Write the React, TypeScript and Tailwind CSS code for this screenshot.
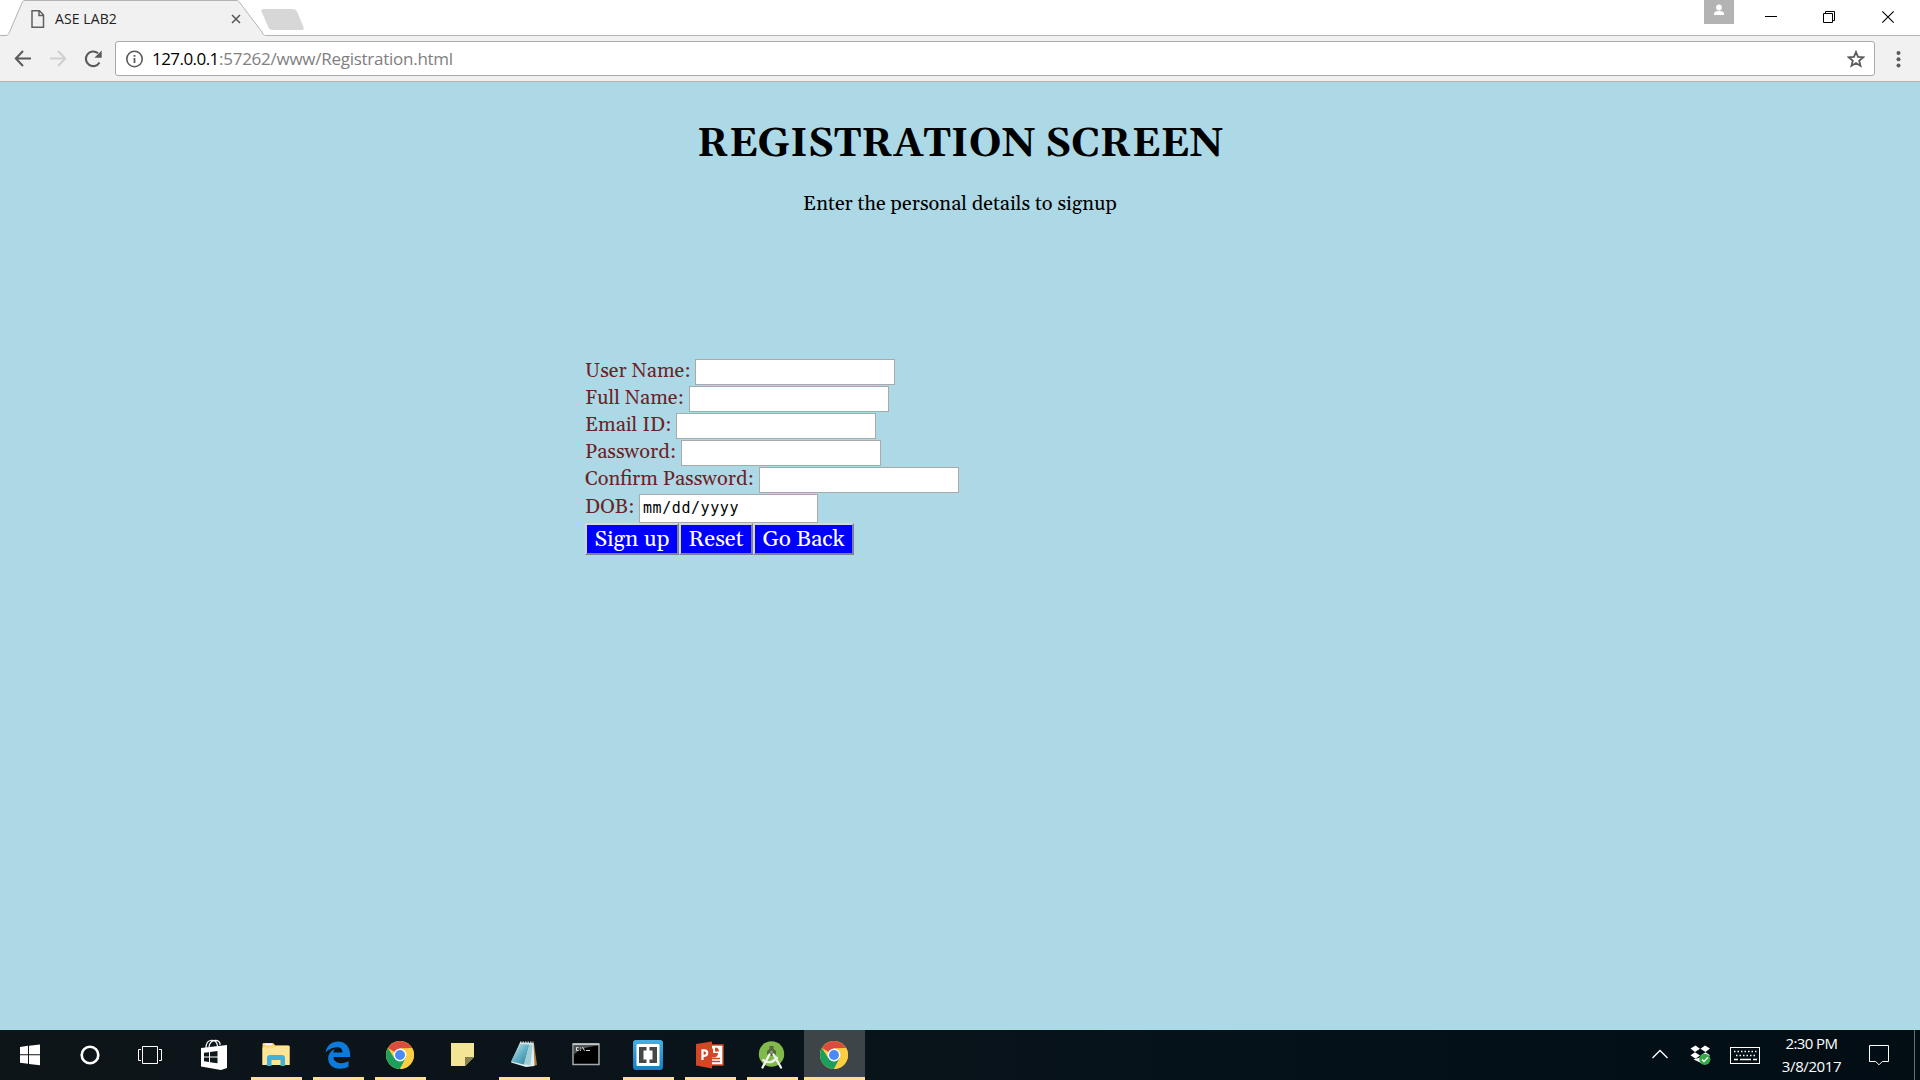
import type { ReactNode } from 'react';

const fields = [
  { label: 'User Name:', width: 'w-[110px]' },
  { label: 'Full Name:', width: 'w-[104px]' },
  { label: 'Email ID:', width: 'w-[91px]' },
  { label: 'Password:', width: 'w-[96px]' },
  { label: 'Confirm Password:', width: 'w-[174px]' },
];

function TabStrip() {
  return (
    <div className="relative h-[36px] bg-white">
      <svg className="absolute inset-0" width="1920" height="36" viewBox="0 0 1920 36" fill="none">
        <path d="M7 36 C8.500 35 9 33 10 31 L21.500 4 C22.500 1.500 23 .5 25 .5 H236 C238 .5 239 1.500 240 4 L262 31 C263 33 264 35.500 266 36 Z" fill="#f1f1f1" />
        <path d="M0 35.500 H6 C8 35.500 8.500 34 9.500 32 L22 3 C23 .8 23.500 .5 25 .5 H236 C238 .5 239 1 240 3 L262 32 C263 34.500 263.500 35.500 265.500 35.500 H1920" stroke="#b3b3b3" />
        <path d="M263.500 9 H293 Q296 9 297 11.500 L303.500 27 Q304.500 30 301.500 30 H273 Q269.500 30 268.500 27.500 L261.500 11.500 Q260.500 9 263.500 9Z" fill="#d7d7d7" />
        <path d="M32 10.800 H39.500 L43.500 15 V27.200 H32 Z M39 11 V15.500 H43.500" stroke="#606060" strokeWidth="1.500" />
        <path d="M232 15 L240 23 M240 15 L232 23" stroke="#555" strokeWidth="1.500" />
        <rect x="1704" width="30" height="24" fill="#b3b3b3" />
        <circle cx="1719" cy="7.500" r="2.900" fill="#fff" />
        <path d="M1714 15 V13.500 Q1714 11 1719 11 T1724 13.500 V15Z" fill="#fff" />
        <path d="M1765 16.500 H1777" stroke="#000" />
        <path d="M1823.500 13.500 H1832.500 V22.500 H1823.500 Z M1825.500 13 V11.500 H1834.500 V20.500 H1833" stroke="#000" />
        <path d="M1882.300 11.300 L1893.700 22.700 M1893.700 11.300 L1882.300 22.700" stroke="#000" strokeWidth="1.100" />
      </svg>
      <span className="relative block pl-[55px] pt-[9px] text-[14px] leading-5 tracking-[0.1px] text-[#222]">ASE LAB2</span>
    </div>
  );
}

function Toolbar() {
  return (
    <div className="flex h-[46px] items-start border-b border-[#b3b3b3] bg-[#f1f1f1] pt-[5px]">
      <svg width="115" height="35" viewBox="0 41 115 35" fill="none" strokeWidth="2">
        <path d="M31 58.500 H16 M23 51 L15.800 58.500 L23 66" stroke="#5a5a5a" />
        <path d="M50 58.500 H65 M58 51 L65.200 58.500 L58 66" stroke="#cfcfcf" />
        <path d="M99.500 62.500 A7.300 7.300 0 1 1 98 53.300" stroke="#5a5a5a" strokeWidth="2.100" />
        <path d="M101.700 50.500 V57.800 H94.400 Z" fill="#5a5a5a" />
      </svg>
      <div className="flex h-[35px] w-[1760px] items-center rounded-[3px] border border-[#a9a9a9] bg-white">
        <svg className="ml-[9px]" width="20" height="20" viewBox="0 0 20 20" fill="none">
          <circle cx="9.500" cy="10" r="7.700" stroke="#5a5a5a" strokeWidth="1.600" />
          <path d="M9.500 9 V14 M9.500 6 V7.800" stroke="#5a5a5a" strokeWidth="1.800" />
        </svg>
        <div className="ml-[7px] flex text-[17px] leading-6 text-[#808080]">
          <span className="w-[67px] whitespace-nowrap tracking-[-0.55px] text-black">127.0.0.1</span>
          <span className="whitespace-nowrap tracking-[-0.26px]">:57262/www/Registration.html</span>
        </div>
        <svg className="ml-auto mr-[9px]" width="18" height="18" viewBox="0 0 18 18" fill="none">
          <path d="M9 2 L11 6.900 L16.200 7.300 L12.200 10.800 L13.500 15.900 L9 13.100 L4.500 15.900 L5.800 10.800 L1.800 7.300 L7 6.900Z" stroke="#5a5a5a" strokeWidth="1.800" />
        </svg>
      </div>
      <svg width="45" height="35" viewBox="0 0 45 35" fill="#5a5a5a">
        <circle cx="23.500" cy="12" r="2" />
        <circle cx="23.500" cy="18.300" r="2" />
        <circle cx="23.500" cy="24.600" r="2" />
      </svg>
    </div>
  );
}

function Page() {
  return (
    <main className="flex-1 bg-[#add8e6] font-['Gelasio','Liberation_Serif',serif] text-[20px]">
      <h1 className="pt-[36px] text-center text-[40px] font-bold leading-[54px] text-black">REGISTRATION SCREEN</h1>
      <p className="pt-[19px] text-center leading-[27px] text-black">Enter the personal details to signup</p>
      <form className="ml-[585px] pt-[141px] text-[#6b2327]">
        {fields.map((f) => (
          <div key={f.label} className="flex h-[27px]">
            <label className={`${f.width} whitespace-nowrap leading-[25px]`}>{f.label}</label>
            <span className="h-[26px] w-[200px] border border-[#a9a9a9] bg-white" />
          </div>
        ))}
        <div className="flex h-[29px]">
          <label className="w-[54px] leading-[26px]">DOB:</label>
          <span className="h-[29px] w-[179px] border border-[#a9a9a9] bg-white pl-[3px] font-['DejaVu_Sans_Mono'] text-[15px] leading-[26px] tracking-[0.57px] text-black">mm/dd/yyyy</span>
        </div>
        <div className="flex text-[22.5px] text-white">
          <FormButton className="w-[94px]">Sign up</FormButton>
          <FormButton className="w-[74px]">Reset</FormButton>
          <FormButton className="w-[101px]">Go Back</FormButton>
        </div>
      </form>
    </main>
  );
}

function FormButton({ className, children }: { className: string; children: ReactNode }) {
  return (
    <button type="button" className={`${className} h-[32px] whitespace-nowrap border-2 border-b-[#808095] border-l-[#d5d5ea] border-r-[#808095] border-t-[#d5d5ea] bg-[#0000ff] pt-[2px] text-center leading-[26px]`}>
      {children}
    </button>
  );
}

function Chrome() {
  return (
    <svg width="30" height="30" viewBox="-15 -15 30 30">
      <circle r="14" fill="#fcce44" />
      <path d="M0 0 L-12.100 -7 A14 14 0 0 1 12.100 -7 L0 -6.500Z" fill="#dd4b3e" />
      <path d="M-5.600 3.200 L-12.100 -7 A14 14 0 0 0 0 14 L5.600 3.200 L0 0Z" fill="#1a9f5c" />
      <path d="M0 -6.500 H12.400 A14 14 0 0 1 0 14 L6 3Z" fill="#fcce44" />
      <circle r="6.400" fill="#fff" />
      <circle r="5" fill="#4b8af5" />
    </svg>
  );
}

const apps: { name: string; open: boolean; active?: boolean; icon: ReactNode }[] = [
  {
    name: 'Explorer', open: true, icon: (
      <svg width="30" height="30" viewBox="0 0 30 30">
        <path d="M1.500 4 Q1.500 3 2.500 3 H12 L14.500 5.500 H27 Q28.500 5.500 28.500 7 V25 H1.500Z" fill="#fbd46c" />
        <path d="M1.500 7.500 H12.500 L15 5.800 H28.500 V25 H1.500Z" fill="#ffe595" />
        <path d="M4 4.500 H11" stroke="#fff" strokeWidth="1.500" />
        <path d="M6 26 V18 Q6 15 9 15 H21 Q24 15 24 18 V26 H19.500 V20 H10.500 V26Z" fill="#3fb1df" />
      </svg>
    ),
  },
  {
    name: 'Edge', open: true, icon: (
      <svg width="30" height="30" viewBox="0 0 30 30">
        <path d="M2.500 12.500 C4 5 9 1.500 15 1.500 C23 1.500 27.500 7.500 27.200 17 H10.500 C10.500 21 14 23.200 18 23.200 C21 23.200 23.500 22.300 25.500 21 V26.500 C23 28 20.500 28.700 17 28.700 C9.500 28.700 5.200 24.500 5.200 18.500 C5.200 14 8 10.700 12 9 C10.800 10.500 10.500 11.500 10.400 12.500 H19.500 C19.500 9 17.500 7.200 14 7.200 C9.500 7.200 5.500 9.300 2.500 12.500Z" fill="#0d7bdc" />
      </svg>
    ),
  },
  { name: 'Chrome', open: true, icon: <Chrome /> },
  {
    name: 'Notes', open: false, icon: (
      <svg width="30" height="30" viewBox="0 0 30 30">
        <path d="M4 3 H27 V17 L18 26 H4Z" fill="#f2e596" />
        <path d="M18 26 V17 H27Z" fill="#857e4d" />
      </svg>
    ),
  },
  {
    name: 'Notepad', open: true, icon: (
      <svg width="30" height="30" viewBox="0 0 30 30">
        <defs>
          <linearGradient id="pad" x1="0" y1="0" x2="1" y2="1">
            <stop offset="0" stopColor="#d5edf3" />
            <stop offset=".5" stopColor="#65b2c7" />
            <stop offset="1" stopColor="#2c7d99" />
          </linearGradient>
        </defs>
        <path d="M25 3 L28 25 L23 26 L21 4Z" fill="#ad7c3c" />
        <path d="M11 2.500 L24.500 3 L25.500 26 L17 27 L2 22.500Z" fill="#e2edef" />
        <path d="M11 4 L20.500 4.500 L15 24.500 L2 21.500Z" fill="url(#pad)" />
        <path d="M20.500 4.500 L23.500 4.500 L21.500 25 L15 24.500Z" fill="#9fced9" />
        <path d="M11 2.500 H24.500" stroke="#c4cdd0" strokeWidth="2" strokeDasharray="1.500 1" />
      </svg>
    ),
  },
  {
    name: 'Terminal', open: false, icon: (
      <svg width="30" height="30" viewBox="0 0 30 30">
        <path d="M2 4 H28 V24.500 H2Z" fill="#000" stroke="#a4a9ab" strokeWidth="1.500" />
        <path d="M2.800 5.500 H27 C18 7 7 9 2.800 15Z" fill="#4e5354" />
        <path d="M2 4.300 H28" stroke="#c0c5c7" strokeWidth="2" />
        <path d="M7.500 7.500 H5.500 V10.500 H7.500 M9.500 7.500 V8.500 M9.500 9.800 V10.800 M11.500 7 L13.500 10.800 M15 10.500 H19" stroke="#ddd" fill="none" />
      </svg>
    ),
  },
  {
    name: 'Brackets', open: true, icon: (
      <svg width="30" height="30" viewBox="0 0 30 30">
        <defs>
          <linearGradient id="brackets" x2="0" y2="1">
            <stop stopColor="#45aee2" />
            <stop offset="1" stopColor="#157fc1" />
          </linearGradient>
        </defs>
        <rect width="30" height="30" rx="3" fill="url(#brackets)" />
        <rect x="3.500" y="4" width="23" height="22" rx="1" fill="#fff" />
        <path d="M6 7 H13.500 V10.500 H10.500 V19.500 H13.500 V23 H6Z M24 7 H16.500 V10.500 H19.500 V19.500 H16.500 V23 H24Z" fill="#484848" />
      </svg>
    ),
  },
  {
    name: 'PowerPoint', open: true, icon: (
      <svg width="30" height="30" viewBox="0 0 30 30">
        <path d="M14 5 H28 V25 H14Z" fill="#fff" stroke="#d24726" strokeWidth="1.400" />
        <path d="M18 8.500 A4.500 4.500 0 1 0 23 13 H18Z M20 7.500 A4 4 0 0 1 24 11.500 H20Z" fill="#d24726" />
        <path d="M17 18.500 H25 M17 21.500 H25" stroke="#d24726" strokeWidth="1.500" />
        <path d="M1 4 L17 1.500 V28.500 L1 25.500Z" fill="#d24726" />
        <path d="M7.500 20 V10.300 H9.500 Q12.200 10.300 12.200 13 T9.500 15.800 H7.500" stroke="#fff" strokeWidth="2.200" fill="none" />
      </svg>
    ),
  },
  {
    name: 'Studio', open: true, icon: (
      <svg width="30" height="30" viewBox="0 0 30 30">
        <circle cx="14.500" cy="14" r="12.700" fill="#82b94b" />
        <path d="M12.500 6 H16.500 V9 L19 11 V14 L17 16 H12 L10 14 V11 L12.500 9Z" fill="#56663f" />
        <circle cx="14.500" cy="12" r="1.500" fill="#8c9d7b" />
        <path d="M12.500 14.500 L5.500 27.500 M16.500 14.500 L24 27.500" stroke="#f0f2ef" strokeWidth="2.300" strokeLinecap="round" />
        <path d="M5.500 19.500 Q14 26 20.500 17" stroke="#f0f2ef" strokeWidth="2.200" fill="none" />
      </svg>
    ),
  },
  { name: 'Browser', open: true, active: true, icon: <Chrome /> },
];

function Taskbar() {
  return (
    <footer className="flex h-[50px] bg-gradient-to-r from-[#0d1519] via-[#08131a] to-[#020d14] text-white">
      <svg width="245" height="50" viewBox="0 0 245 50" fill="none">
        <path d="M20 17 L28 15.800 V24.300 H20Z M29 15.700 L40 14.500 V24.300 H29Z M20 25.300 H28 V33.800 L20 32.700Z M29 25.300 H40 V35.300 L29 34Z" fill="#fff" />
        <circle cx="90" cy="25" r="8.300" stroke="#fff" strokeWidth="2.600" />
        <path d="M142.500 16.500 H157.500 V33.500 H142.500Z M141 19.500 H138.500 V30.500 H141 M159 19.500 H161.500 V30.500 H159" stroke="#fff" />
        <path d="M206 18 C206 8 217 8 217.500 16 M209 17 C210 8 221 9 220 15" stroke="#fff" strokeWidth="1.200" />
        <path d="M201 18 L227 15 V38 L221 40 L201 36.500Z" fill="#fff" />
        <path d="M204 22.800 L209 22.200 V26.500 H204Z M210 22 L217.500 21 V26.500 H210Z M204 27.500 H209 V32 L204 31.300Z M210 27.500 H217.500 V33.300 L210 32.200Z" fill="#0e171b" />
      </svg>
      {apps.map((a) => (
        <div key={a.name} className={a.active ? 'ml-px flex w-[61px] flex-col items-center justify-between bg-[#3d4549] pt-[10px]' : 'flex w-[62px] flex-col items-center justify-between pt-[10px]'}>
          <span className={a.active ? 'mr-px' : ''}>{a.icon}</span>
          {a.open && <span className={a.active ? 'h-[3px] w-full bg-[#ffdf94]' : 'h-[3px] w-[51px] bg-[#ffdf94]'} />}
        </div>
      ))}
      <svg className="ml-auto" width="150" height="50" viewBox="1640 0 150 50" fill="none">
        <path d="M1652.500 28 L1660 20.500 L1667.500 28" stroke="#fff" strokeWidth="1.300" />
        <path d="M1690.500 18.500 L1695.500 15.500 L1700 18.800 L1695 22Z M1700.500 18.800 L1705 15.500 L1710 18.500 L1705.500 22Z M1690.500 25.200 L1695 22.300 L1700 25.500 L1695.500 28.700Z M1700.500 25.500 L1705.500 22.300 L1710 25.200 L1705 28.700Z M1693.500 29.500 L1700 27.500 L1703 34 L1697 31Z" fill="#fff" />
        <circle cx="1704.800" cy="29.300" r="5.600" fill="#35ab45" />
        <path d="M1702 29.500 L1704 31.500 L1708 27.300" stroke="#fff" strokeWidth="1.300" />
        <rect x="1730.500" y="17.500" width="29" height="16" stroke="#fff" />
        <path d="M1734 21.500 H1757 M1736 25.500 H1755" stroke="#fff" strokeWidth="1.500" strokeDasharray="1.500 2" />
        <path d="M1734 29.500 H1738 M1740 29.500 H1751 M1753 29.500 H1757" stroke="#fff" strokeWidth="1.300" />
      </svg>
      <div className="w-[43px] pt-[2px] text-center text-[15px] leading-[23px]">
        <div className="-mx-3 whitespace-nowrap tracking-[-0.6px]">2:30 PM</div>
        <div className="-mx-3 whitespace-nowrap tracking-[-0.4px]">3/8/2017</div>
      </div>
      <svg width="87" height="50" viewBox="1833 0 87 50" fill="none">
        <path d="M1869.500 15.500 H1888.500 V31.500 H1882.300 L1879 34.800 L1875.700 31.500 H1869.500Z" stroke="#fff" />
        <path d="M1914.500 0 V50" stroke="#647075" />
      </svg>
    </footer>
  );
}

export default function App() {
  return (
    <div className="flex h-[1080px] w-[1920px] flex-col overflow-hidden font-['Open_Sans','Noto_Sans',sans-serif]">
      <TabStrip />
      <Toolbar />
      <Page />
      <Taskbar />
    </div>
  );
}
